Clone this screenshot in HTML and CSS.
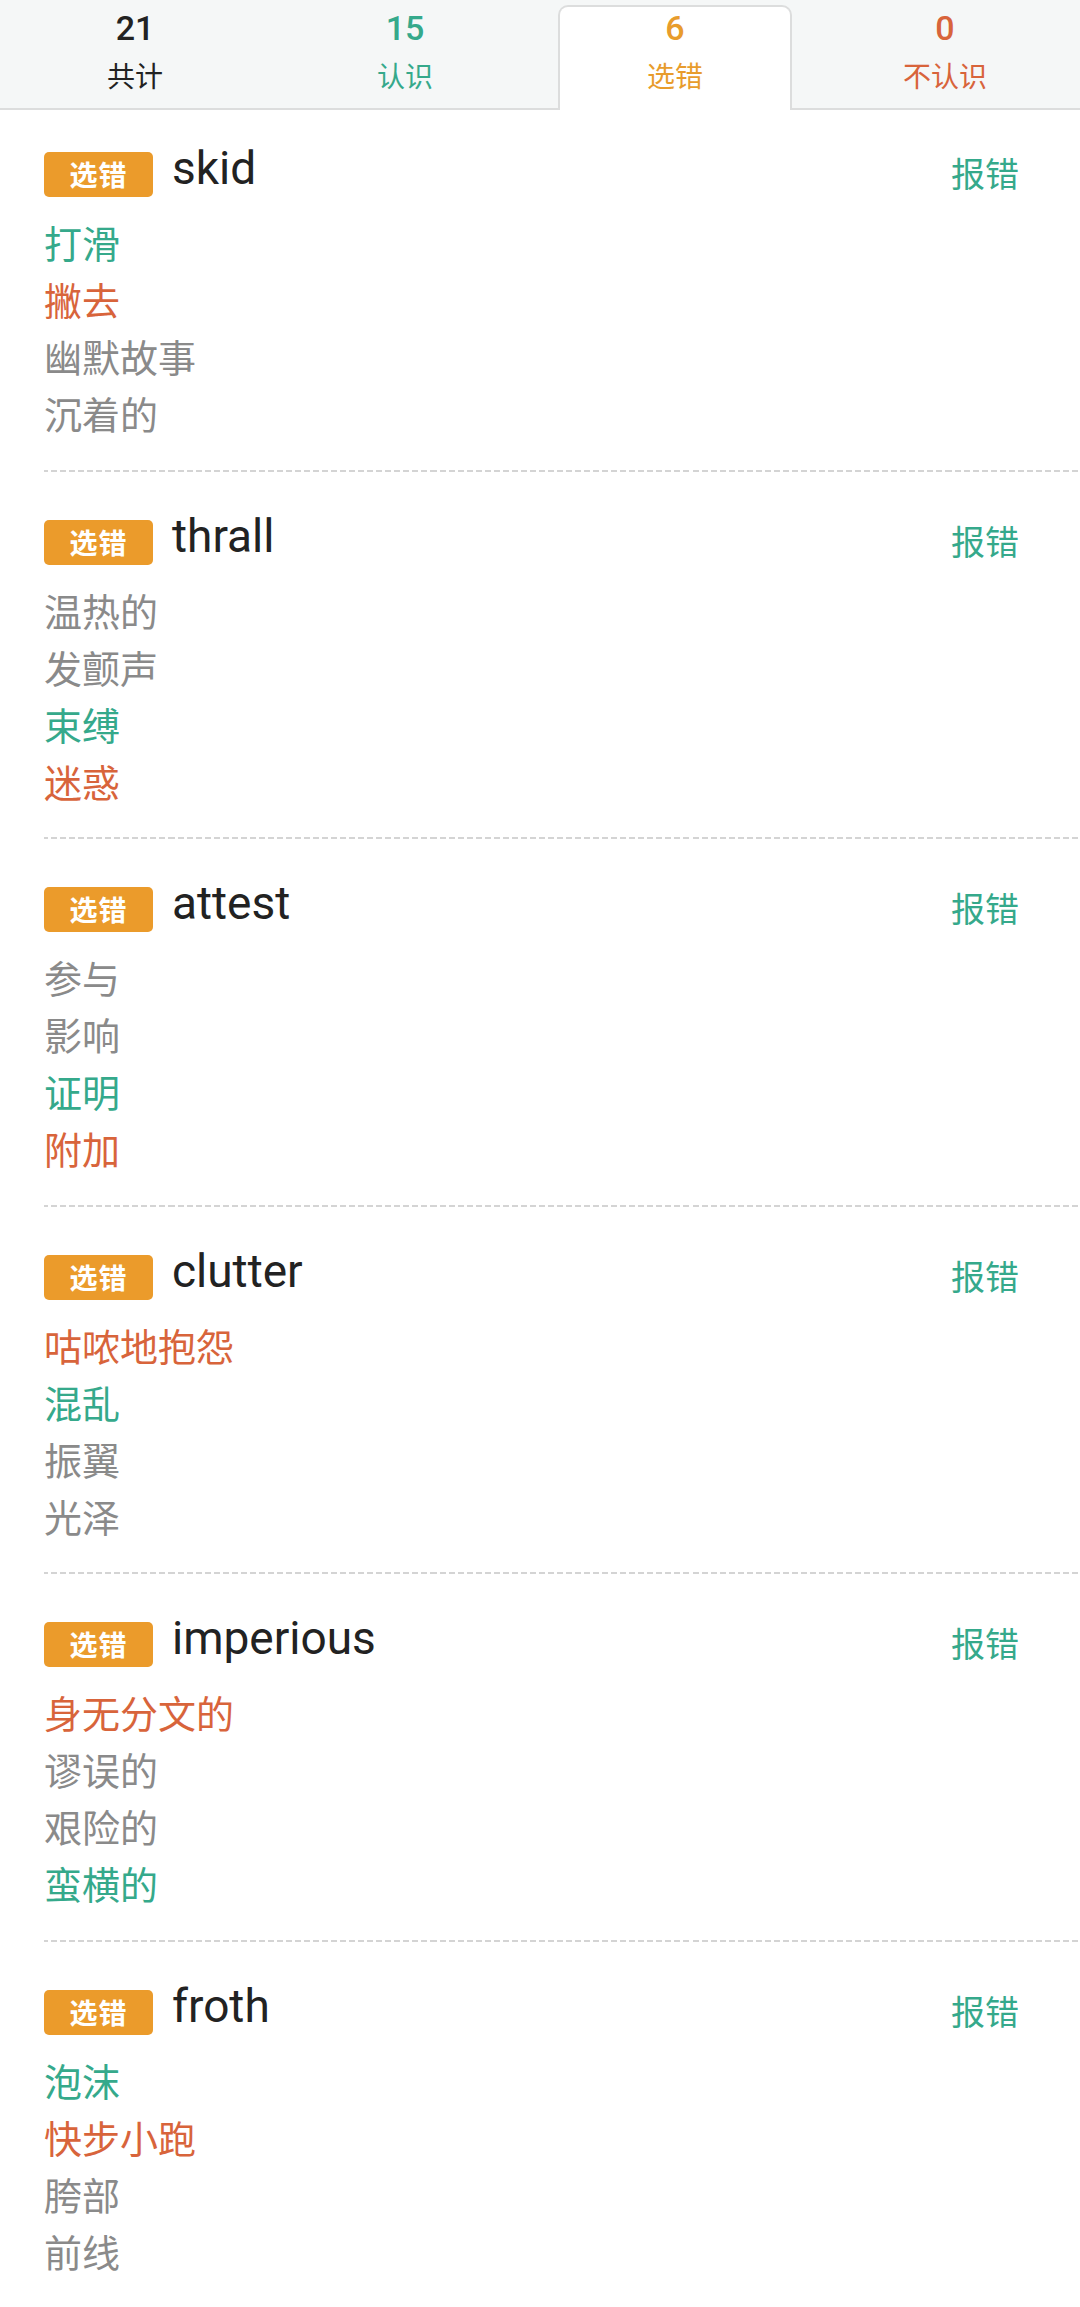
FILE: index.html
```html
<!DOCTYPE html>
<html lang="zh">
<head>
<meta charset="utf-8">
<title>选错</title>
<link rel="stylesheet" href="styles.css">
</head>
<body>
<div class="tabs">
  <div class="tab"><div class="num c-dark">21</div><div class="lbl c-dark">共计</div></div>
  <div class="tab"><div class="num c-green">15</div><div class="lbl c-green">认识</div></div>
  <div class="tab active"><div class="num c-orange">6</div><div class="lbl c-orange">选错</div></div>
  <div class="tab"><div class="num c-red">0</div><div class="lbl c-red">不认识</div></div>
</div>

<div class="list">
  <div class="card">
    <div class="head"><span class="badge">选错</span><span class="word">skid</span><span class="report">报错</span></div>
    <div class="m c-green">打滑</div>
    <div class="m c-red">撇去</div>
    <div class="m c-gray">幽默故事</div>
    <div class="m c-gray">沉着的</div>
  </div>
  <div class="card">
    <div class="head"><span class="badge">选错</span><span class="word">thrall</span><span class="report">报错</span></div>
    <div class="m c-gray">温热的</div>
    <div class="m c-gray">发颤声</div>
    <div class="m c-green">束缚</div>
    <div class="m c-red">迷惑</div>
  </div>
  <div class="card">
    <div class="head"><span class="badge">选错</span><span class="word">attest</span><span class="report">报错</span></div>
    <div class="m c-gray">参与</div>
    <div class="m c-gray">影响</div>
    <div class="m c-green">证明</div>
    <div class="m c-red">附加</div>
  </div>
  <div class="card">
    <div class="head"><span class="badge">选错</span><span class="word">clutter</span><span class="report">报错</span></div>
    <div class="m c-red">咕哝地抱怨</div>
    <div class="m c-green">混乱</div>
    <div class="m c-gray">振翼</div>
    <div class="m c-gray">光泽</div>
  </div>
  <div class="card">
    <div class="head"><span class="badge">选错</span><span class="word">imperious</span><span class="report">报错</span></div>
    <div class="m c-red">身无分文的</div>
    <div class="m c-gray">谬误的</div>
    <div class="m c-gray">艰险的</div>
    <div class="m c-green">蛮横的</div>
  </div>
  <div class="card">
    <div class="head"><span class="badge">选错</span><span class="word">froth</span><span class="report">报错</span></div>
    <div class="m c-green">泡沫</div>
    <div class="m c-red">快步小跑</div>
    <div class="m c-gray">胯部</div>
    <div class="m c-gray">前线</div>
  </div>
</div>
</body>
</html>
```

FILE: styles.css
```css
* { box-sizing: border-box; }
html, body { margin: 0; padding: 0; background: #ffffff; }
body {
  font-family: Roboto, "Noto Sans CJK SC", sans-serif;
  width: 1080px;
  overflow: hidden;
}

.c-dark { color: #222222; }
.c-green { color: #35a98b; }
.c-orange { color: #e89c2c; }
.c-red { color: #d8643b; }
.c-gray { color: #8a8a8a; }

.tabs {
  display: grid;
  grid-template-columns: repeat(4, 1fr);
  height: 110px;
  background: #f5f7f7;
  border-bottom: 2px solid #dcdddd;
}
.tab {
  display: flex;
  flex-direction: column;
  align-items: center;
  padding-top: 10px;
}
.tab.active {
  margin: 5px 18px -2px;
  padding-top: 3px;
  background: #ffffff;
  border: 2px solid #dcdddd;
  border-bottom: none;
  border-radius: 10px 10px 0 0;
}
.num {
  font-family: Roboto, sans-serif;
  font-weight: 500;
  font-size: 34px;
  line-height: 36px;
}
.lbl {
  font-family: "Noto Sans CJK SC", sans-serif;
  font-size: 28px;
  line-height: 40px;
  margin-top: 9px;
}

.list { padding-left: 44px; }
.card {
  padding: 48px 0 28.5px;
  border-bottom: 2px solid transparent;
  border-image: repeating-linear-gradient(to right, #d4d4d4 0 6px, transparent 6px 9px) 2;
}
.card:first-child { padding-top: 42px; }
.card:last-child { border-bottom: none; border-image: none; }

.head {
  display: flex;
  align-items: flex-start;
  height: 45px;
  margin-bottom: 16px;
}
.badge {
  width: 109px;
  height: 45px;
  border-radius: 5px;
  background: #eb9b2b;
  color: #ffffff;
  font-family: "Noto Sans CJK SC", sans-serif;
  font-weight: 700;
  font-size: 28px;
  line-height: 45px;
  text-align: center;
  letter-spacing: 1px;
}
.word {
  margin-left: 19px;
  margin-top: -7px;
  font-family: Roboto, sans-serif;
  font-size: 46px;
  line-height: 46px;
  color: #222222;
}
.report {
  margin-left: auto;
  margin-right: 61px;
  margin-top: -1px;
  font-family: "Noto Sans CJK SC", sans-serif;
  font-size: 34px;
  line-height: 44px;
  color: #35a98b;
}
.m {
  font-family: "Noto Sans CJK SC", sans-serif;
  font-size: 38px;
  line-height: 57px;
}
```
